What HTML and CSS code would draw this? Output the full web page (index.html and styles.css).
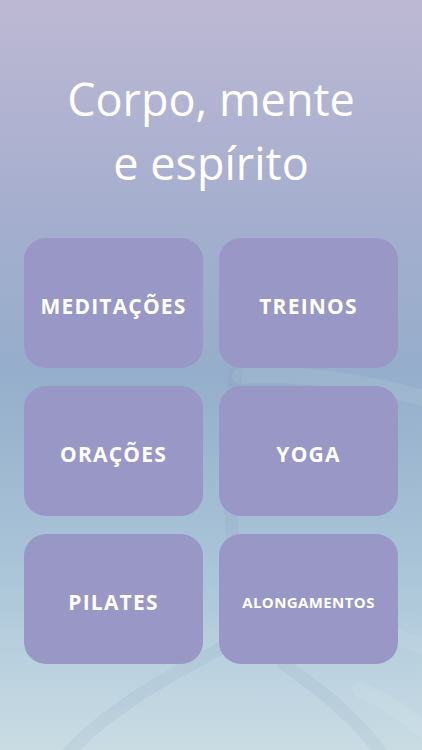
FILE: index.html
```html
<!DOCTYPE html>
<html lang="pt">
<head>
    <meta charset="UTF-8">
    <meta name="viewport" content="width=device-width, initial-scale=1.0">
    <title>Corpo, mente e espírito</title>
    <link rel="stylesheet" href="styles.css">
</head>
<body>
    <div class="screen">
        <svg class="backdrop" width="422" height="750" viewBox="0 0 422 750">
            <path class="shade" d="M236 372 C226 440 226 500 236 560" />
            <path class="shade" d="M222 648 C160 680 100 715 62 760" />
            <path class="shade" d="M284 664 C320 690 360 720 386 760" />
            <path class="glow" d="M240 376 C300 372 370 382 430 400" />
            <path class="glow" d="M322 622 C360 626 400 636 430 650" />
            <path class="glow" d="M360 690 C385 700 405 715 430 735" />
        </svg>

        <h1 class="title">Corpo, mente<br>e espírito</h1>

        <div class="grid">
            <a class="tile" href="#">MEDITAÇÕES</a>
            <a class="tile" href="#">TREINOS</a>
            <a class="tile" href="#">ORAÇÕES</a>
            <a class="tile" href="#">YOGA</a>
            <a class="tile" href="#">PILATES</a>
            <a class="tile small" href="#">ALONGAMENTOS</a>
        </div>
    </div>
</body>
</html>
```

FILE: styles.css
```css
body {
    margin: 0;
    font-family: "Open Sans", "DejaVu Sans", sans-serif;
    color: #fff;
}

.screen {
    position: relative;
    height: 750px;
    overflow: hidden;
    background: linear-gradient(180deg, #bdb8d3 0%, #a4aece 30%, #95aecb 50%, #a9c4d8 75%, #c9dce4 100%);
}

.backdrop {
    position: absolute;
    top: 0;
    left: 0;
}

.backdrop path {
    fill: none;
    stroke-width: 13;
    stroke-linecap: round;
}

.backdrop .shade {
    stroke: #6f8aa8;
    stroke-opacity: 0.09;
}

.backdrop .glow {
    stroke: #ffffff;
    stroke-opacity: 0.08;
    stroke-width: 16;
}

.title {
    position: relative;
    margin: 0;
    padding-top: 67px;
    font-size: 45px;
    font-weight: 400;
    line-height: 64px;
    text-align: center;
}

.grid {
    position: relative;
    display: grid;
    grid-template-columns: 179px 179px;
    grid-auto-rows: 130px;
    column-gap: 16px;
    row-gap: 18px;
    padding: 43px 24px 0;
}

.tile {
    display: flex;
    align-items: center;
    justify-content: center;
    padding-top: 6px;
    box-sizing: border-box;
    background-color: #9897c6;
    border-radius: 22px;
    color: #fff;
    text-decoration: none;
    font-size: 21px;
    font-weight: 700;
    letter-spacing: 1.2px;
}

.tile.small {
    font-size: 15px;
    letter-spacing: 0.4px;
}
```
